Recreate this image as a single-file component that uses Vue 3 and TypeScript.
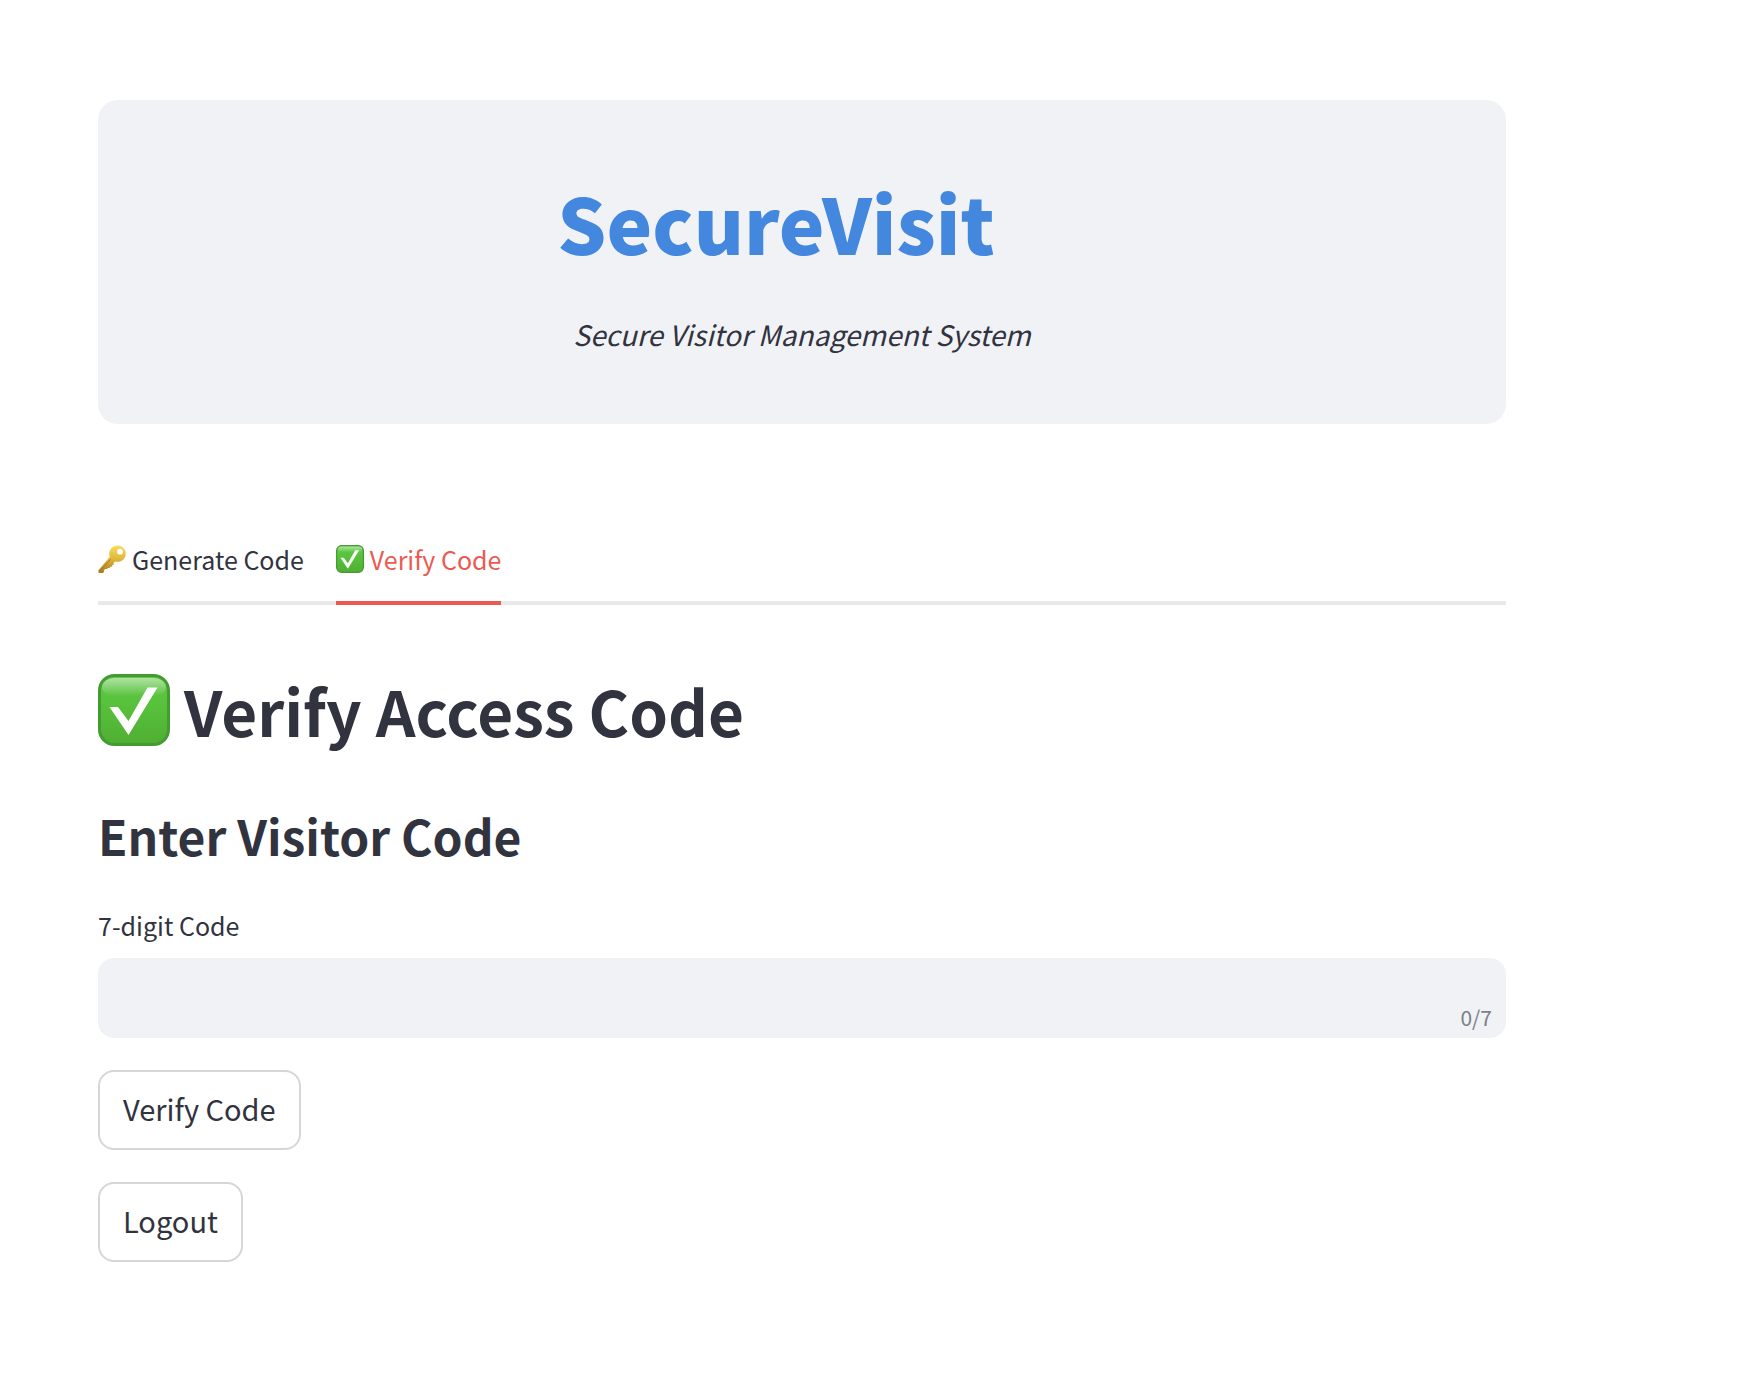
<script setup lang="ts">
import { computed, ref } from 'vue'

type Tab = 'generate' | 'verify'

const maxLength = 7
const activeTab = ref<Tab>('verify')
const code = ref('')
const counter = computed(() => `${code.value.length}/${maxLength}`)
</script>

<template>
  <main class="page">
    <header class="hero">
      <h1 class="brand">SecureVisit</h1>
      <p class="tagline">Secure Visitor Management System</p>
    </header>

    <div class="tabs" role="tablist">
      <button
        class="tab"
        :class="{ active: activeTab === 'generate' }"
        type="button"
        role="tab"
        :aria-selected="activeTab === 'generate'"
        @click="activeTab = 'generate'"
      >
        <svg class="tab-icon" viewBox="0 0 28 28" aria-hidden="true">
          <defs>
            <linearGradient id="key-gold" x1="0" y1="0" x2="0" y2="1">
              <stop offset="0" stop-color="#f7dc5a" />
              <stop offset="0.5" stop-color="#dfb63a" />
              <stop offset="1" stop-color="#a87a20" />
            </linearGradient>
          </defs>
          <path
            fill="url(#key-gold)"
            fill-rule="evenodd"
            d="M19.6 0.6a8.2 8.2 0 0 1 8.2 8.2a8.2 8.2 0 0 1-10.6 7.7l-1.6 1.6l0.2 1.7l-1.6 0.3l0.1 1.6l-2 0.1l-0.8 1.3l-1.7-0.2l-0.6 1.2l-2-0.1l-1.1 1l-0.2 2.1l-0.9 0.9H0.7L0.3 25.5l11.5-13.7A8.2 8.2 0 0 1 19.6 0.6ZM22 3.8a2.9 2.9 0 1 0 0 5.8a2.9 2.9 0 1 0 0-5.8Z"
          />
          <path d="M2.2 25.5L12.8 14.2" fill="none" stroke="#9c7420" stroke-width="0.8" />
        </svg>
        <span>Generate Code</span>
      </button>
      <button
        class="tab"
        :class="{ active: activeTab === 'verify' }"
        type="button"
        role="tab"
        :aria-selected="activeTab === 'verify'"
        @click="activeTab = 'verify'"
      >
        <svg class="tab-icon" viewBox="0 0 72 72" aria-hidden="true">
          <rect x="1.5" y="1.5" width="69" height="69" rx="13" fill="url(#check-green)" stroke="#449b31" stroke-width="3" />
          <rect x="5" y="4" width="62" height="15" rx="9" fill="url(#check-shine)" />
          <path fill="#fff" d="M11.5 33H20L30.5 47L49.5 13.5H59.5L30.5 61Z" />
        </svg>
        <span>Verify Code</span>
      </button>
    </div>

    <section class="panel">
      <h2 class="title">
        <svg class="title-icon" viewBox="0 0 72 72" aria-hidden="true">
          <defs>
            <linearGradient id="check-green" x1="0" y1="0" x2="0" y2="1">
              <stop offset="0" stop-color="#5fc746" />
              <stop offset="0.4" stop-color="#58c23c" />
              <stop offset="1" stop-color="#50ae32" />
            </linearGradient>
            <linearGradient id="check-shine" x1="0" y1="0" x2="0" y2="1">
              <stop offset="0" stop-color="#fff" stop-opacity="0.5" />
              <stop offset="1" stop-color="#fff" stop-opacity="0" />
            </linearGradient>
          </defs>
          <rect x="1.5" y="1.5" width="69" height="69" rx="15" fill="url(#check-green)" stroke="#449b31" stroke-width="3" />
          <rect x="4" y="4" width="64" height="18" rx="12" fill="url(#check-shine)" />
          <path fill="#fff" d="M11.5 33H20L30.5 47L49.5 13.5H59.5L30.5 61Z" />
        </svg>
        <span>Verify Access Code</span>
      </h2>
      <h3 class="subtitle">Enter Visitor Code</h3>

      <label class="label" for="visitor-code">7-digit Code</label>
      <div class="field">
        <input id="visitor-code" v-model="code" class="input" type="text" :maxlength="maxLength" />
        <span class="counter">{{ counter }}</span>
      </div>

      <button class="button" type="button">Verify Code</button>
    </section>

    <button class="button" type="button">Logout</button>
  </main>
</template>

<style>
body {
  background: #fff;
}
</style>

<style scoped>
.page {
  box-sizing: border-box;
  padding: 100px 238px 130px 98px;
  color: #31333f;
  font-family: "Source Sans Pro", "Noto Sans CJK SC", sans-serif;
}

.hero {
  padding: 70px 40px;
  border-radius: 20px;
  background: #f0f2f6;
  text-align: center;
}

.brand {
  margin: 0;
  padding-right: 52px;
  color: #4387de;
  font-size: 77px;
  font-weight: 900;
  line-height: 104px;
}

.tagline {
  margin: 40px 0 0;
  font-size: 28px;
  font-style: italic;
  line-height: 40px;
}

.tabs {
  display: flex;
  gap: 32px;
  margin-top: 96px;
  box-shadow: inset 0 -4px #e9e9ea;
}

.tab {
  display: flex;
  align-items: center;
  gap: 6px;
  height: 85px;
  padding: 0 0 4px;
  border: 0;
  border-bottom: 4px solid transparent;
  background: none;
  color: inherit;
  font-family: inherit;
  font-size: 25px;
  line-height: 40px;
  cursor: pointer;
}

.tab.active {
  border-bottom-color: #eb5a52;
  color: #eb5a52;
}

.tab-icon {
  width: 28px;
  height: 28px;
}

.panel {
  margin-bottom: 32px;
}

.title {
  display: flex;
  align-items: center;
  gap: 14px;
  margin: 0;
  padding-top: 62px;
  font-size: 62px;
  font-weight: 700;
  line-height: 86px;
}

.title-icon {
  width: 72px;
  height: 72px;
}

.subtitle {
  margin: 48px 0 0;
  font-size: 48px;
  font-weight: 700;
  line-height: 68px;
}

.label {
  display: block;
  margin-top: 36px;
  font-size: 25px;
  line-height: 40px;
}

.field {
  position: relative;
  margin: 13px 0 32px;
}

.input {
  display: block;
  box-sizing: border-box;
  width: 100%;
  height: 80px;
  padding: 0 80px 0 24px;
  border: 0;
  border-radius: 16px;
  outline: none;
  background: #f0f2f6;
  color: inherit;
  font-family: inherit;
  font-size: 29px;
}

.counter {
  position: absolute;
  right: 14px;
  bottom: 6px;
  color: #7d7f88;
  font-size: 21px;
  line-height: 30px;
}

.button {
  display: block;
  height: 80px;
  padding: 0 23px 4px;
  border: 2px solid #d6d6d8;
  border-radius: 16px;
  background: #fff;
  color: inherit;
  font-family: inherit;
  font-size: 29px;
  line-height: 40px;
  cursor: pointer;
}
</style>
